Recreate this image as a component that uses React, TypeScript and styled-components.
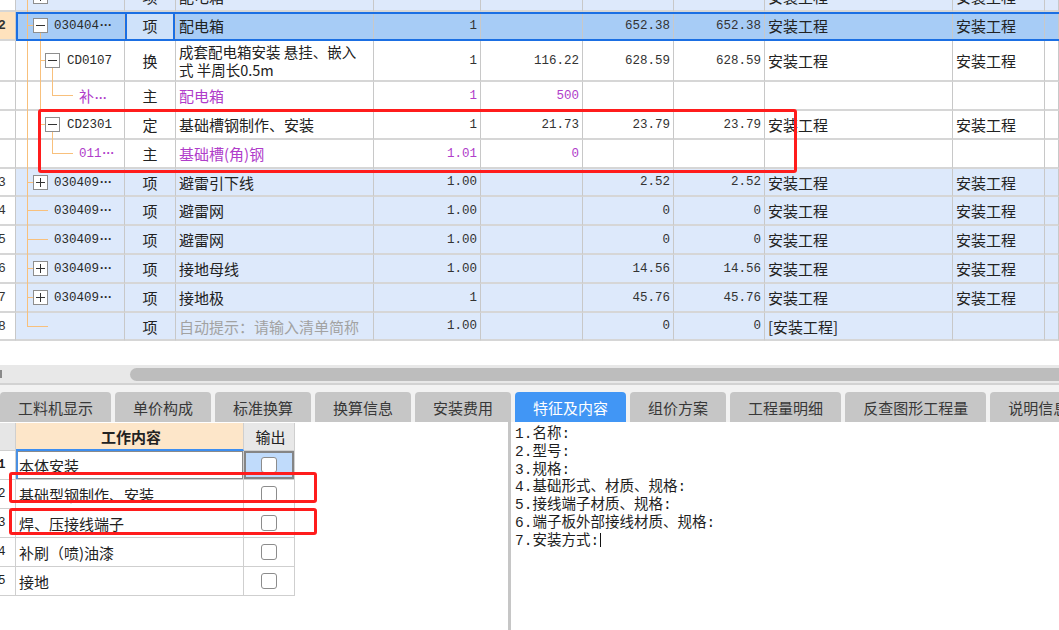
import React from "react";
import styled, { createGlobalStyle, css } from "styled-components";

const CJK = `"Noto Sans CJK SC", "Liberation Sans", sans-serif`;
const MONO = `"Liberation Mono", "DejaVu Sans Mono", "Noto Sans CJK SC", monospace`;
const COLS = "16px 109px 51px 198px 107px 102px 91px 91px 188px 92px 1fr";

const GlobalStyle = createGlobalStyle`
  html, body { margin: 0; padding: 0; background: #fff; }
  body { font-family: ${CJK}; color: #222; overflow: hidden; }
`;

type Kind = "item" | "sel" | "sub";
type Tone = "main" | "hint" | undefined;

const rowBg: Record<Kind, string> = { item: "#dde9fb", sel: "#a7ccf6", sub: "#fff" };
const toneColor = (t: Tone) => (t === "main" ? "#b03dca" : t === "hint" ? "#a2a2a2" : "#222");

interface BillRow {
  h: number;
  kind: Kind;
  num?: string;
  guides: string[];
  box?: "+" | "-";
  pad: number;
  gap?: number;
  code?: string;
  more?: boolean;
  type: string;
  name: React.ReactNode;
  qty?: string;
  price?: string;
  total?: string;
  sum?: string;
  fee?: string;
  major?: string;
  tone?: Tone;
}

const rows: BillRow[] = [
  { h: 29, kind: "item", num: "1", guides: ["V0", "H0b"], box: "+", pad: 17, code: "030404", more: true, type: "项", name: "配电箱", qty: "1", total: "1137.37", sum: "1137.37", fee: "安装工程", major: "安装工程" },
  { h: 29, kind: "sel", num: "2", guides: ["V0", "H0b", "V1d"], box: "-", pad: 17, code: "030404", more: true, type: "项", name: "配电箱", qty: "1", total: "652.38", sum: "652.38", fee: "安装工程", major: "安装工程" },
  {
    h: 41, kind: "sub", guides: ["V0", "V1", "H1b", "V2d"], box: "-", pad: 29, gap: 7, code: "CD0107", type: "换",
    name: (<>成套配电箱安装 悬挂、嵌入<br />式 半周长0.5m</>),
    qty: "1", price: "116.22", total: "628.59", sum: "628.59", fee: "安装工程", major: "安装工程",
  },
  { h: 29, kind: "sub", guides: ["V0", "V1", "V2t", "H2l"], pad: 63, code: "补", more: true, type: "主", name: "配电箱", qty: "1", price: "500", tone: "main" },
  { h: 29, kind: "sub", guides: ["V0", "V1t", "H1b", "V2d"], box: "-", pad: 29, gap: 7, code: "CD2301", type: "定", name: "基础槽钢制作、安装", qty: "1", price: "21.73", total: "23.79", sum: "23.79", fee: "安装工程", major: "安装工程" },
  { h: 29, kind: "sub", guides: ["V0", "V2t", "H2l"], pad: 63, code: "011", more: true, type: "主", name: "基础槽(角)钢", qty: "1.01", price: "0", tone: "main" },
  { h: 28, kind: "item", num: "3", guides: ["V0", "H0b"], box: "+", pad: 17, code: "030409", more: true, type: "项", name: "避雷引下线", qty: "1.00", total: "2.52", sum: "2.52", fee: "安装工程", major: "安装工程" },
  { h: 29, kind: "item", num: "4", guides: ["V0", "H0l"], pad: 38, code: "030409", more: true, type: "项", name: "避雷网", qty: "1.00", total: "0", sum: "0", fee: "安装工程", major: "安装工程" },
  { h: 29, kind: "item", num: "5", guides: ["V0", "H0l"], pad: 38, code: "030409", more: true, type: "项", name: "避雷网", qty: "1.00", total: "0", sum: "0", fee: "安装工程", major: "安装工程" },
  { h: 29, kind: "item", num: "6", guides: ["V0", "H0b"], box: "+", pad: 17, code: "030409", more: true, type: "项", name: "接地母线", qty: "1.00", total: "14.56", sum: "14.56", fee: "安装工程", major: "安装工程" },
  { h: 29, kind: "item", num: "7", guides: ["V0", "H0b"], box: "+", pad: 17, code: "030409", more: true, type: "项", name: "接地极", qty: "1", total: "45.76", sum: "45.76", fee: "安装工程", major: "安装工程" },
  { h: 28, kind: "item", num: "8", guides: ["V0t", "H0l"], pad: 38, type: "项", name: "自动提示：请输入清单简称", qty: "1.00", total: "0", sum: "0", fee: "[安装工程]", tone: "hint" },
];

const tabs = ["工料机显示", "单价构成", "标准换算", "换算信息", "安装费用", "特征及内容", "组价方案", "工程量明细", "反查图形工程量", "说明信息"];
const works = ["本体安装", "基础型钢制作、安装", "焊、压接线端子", "补刷（喷)油漆", "接地"];
const features = ["1.名称:", "2.型号:", "3.规格:", "4.基础形式、材质、规格:", "5.接线端子材质、规格:", "6.端子板外部接线材质、规格:", "7.安装方式:"];

const Page = styled.div`
  width: 1059px;
  height: 630px;
  display: flex;
  flex-direction: column;
  overflow: hidden;
  background: #fff;
`;

const TopArea = styled.div`
  position: relative;
  height: 365px;
  flex: none;
  overflow: hidden;
`;

const GridBody = styled.div`
  margin-top: -17px;
`;

const Row = styled.div<{ $h: number; $kind: Kind }>`
  position: relative;
  display: grid;
  grid-template-columns: ${COLS};
  height: ${(p) => p.$h}px;
  background: ${(p) => rowBg[p.$kind]};
  ${(p) =>
    p.$kind === "sel" &&
    css`
      &::after {
        content: "";
        position: absolute;
        left: 16px;
        right: -4px;
        top: 0;
        bottom: 0;
        border: 2px solid #1b6fe3;
        pointer-events: none;
      }
    `}
`;

const Cell = styled.div<{ $align?: "left" | "right" | "center"; $tone?: Tone }>`
  box-sizing: border-box;
  display: flex;
  align-items: center;
  justify-content: ${(p) => (p.$align === "right" ? "flex-end" : p.$align === "center" ? "center" : "flex-start")};
  padding: 0 3px;
  border-right: 1px solid #c8c8c8;
  border-bottom: 2px solid #d6d6d6;
  overflow: hidden;
  white-space: nowrap;
  font-family: ${CJK};
  font-size: 15px;
  color: ${(p) => toneColor(p.$tone)};
`;

const NumCell = styled(Cell)`
  font-family: ${MONO};
  font-size: 12.5px;
  color: ${(p) => (p.$tone === "main" ? "#b03dca" : "#333")};
`;

const NoCell = styled(Cell)<{ $active?: boolean }>`
  padding: 0;
  background: ${(p) => (p.$active ? "#ffe2bd" : "#fff")};
  font-family: ${MONO};
  font-size: 13px;
  font-weight: ${(p) => (p.$active ? 700 : 400)};
  color: #333;
  text-indent: -2px;
`;

const TypeCell = styled(Cell)<{ $active?: boolean }>`
  ${(p) =>
    p.$active &&
    css`
      background: #cfe2fa;
      box-shadow: inset 2px 0 #1b6fe3, inset -2px 0 #1b6fe3;
    `}
`;

const Wrap = styled.span`
  white-space: normal;
  font-size: 14.5px;
  line-height: 18px;
`;

const CodeCell = styled(Cell)<{ $pad: number }>`
  position: relative;
  overflow: visible;
  padding: 0 0 0 ${(p) => p.$pad}px;
`;

const Guides = styled.svg`
  position: absolute;
  left: 0;
  top: 0;
  overflow: visible;
`;

const ToggleBox = styled.span<{ $gap: number }>`
  position: relative;
  z-index: 1;
  box-sizing: border-box;
  width: 15px;
  height: 15px;
  flex: none;
  display: inline-flex;
  align-items: center;
  justify-content: center;
  margin-right: ${(p) => p.$gap}px;
  border: 1px solid #8e8e8e;
  background: #fff;
`;

const CodeText = styled.span<{ $tone?: Tone }>`
  position: relative;
  z-index: 1;
  font-family: ${MONO};
  font-size: 12.5px;
  color: ${(p) => (p.$tone === "main" ? "#b03dca" : "#2a2a2a")};
`;

const CodeCjk = styled.span`
  font-family: ${CJK};
  font-size: 15px;
`;

const Dots = styled.span`
  font-family: "Liberation Sans", sans-serif;
  font-size: 12px;
  font-weight: 700;
  margin-left: 1px;
`;

const Mark = styled.div<{ $x: number; $y: number; $w: number; $h: number }>`
  position: absolute;
  left: ${(p) => p.$x}px;
  top: ${(p) => p.$y}px;
  width: ${(p) => p.$w}px;
  height: ${(p) => p.$h}px;
  box-sizing: border-box;
  border: 3px solid #ff1c1c;
  border-radius: 3px;
  pointer-events: none;
  z-index: 5;
`;

const HScroll = styled.div`
  flex: none;
  height: 18px;
  display: flex;
  align-items: center;
  background: #e8e8e8;
`;

const ArrowStub = styled.span`
  width: 2px;
  height: 8px;
  background: #8a8a8a;
`;

const Thumb = styled.span`
  height: 13px;
  margin-left: 128px;
  flex: 1;
  border-radius: 7px 0 0 7px;
  background: #bdbdbd;
`;

const TabBar = styled.div`
  flex: none;
  box-sizing: border-box;
  height: 39px;
  display: flex;
  align-items: flex-end;
  gap: 4px;
  border-top: 2px solid #d2d2d2;
  background: #f2f2f2;
  overflow: hidden;
`;

const Tab = styled.div<{ $active?: boolean }>`
  flex: none;
  height: 30px;
  padding: 0 18px;
  display: flex;
  align-items: center;
  border-radius: 4px 4px 0 0;
  font-size: 15px;
  white-space: nowrap;
  background: ${(p) => (p.$active ? "#4196f5" : "#c6c6c6")};
  color: ${(p) => (p.$active ? "#fff" : "#383838")};
`;

const Bottom = styled.div`
  flex: 1;
  display: flex;
  min-height: 0;
`;

const LeftPane = styled.div`
  position: relative;
  width: 508px;
  flex: none;
  padding-top: 1px;
  background: #fff;
`;

const Divider = styled.div`
  width: 3px;
  flex: none;
  background: #c6c6c6;
`;

const RightPane = styled.div`
  flex: 1;
  padding: 4px 0 0 4px;
  font-family: ${MONO};
  font-size: 14.5px;
  line-height: 17.8px;
  color: #1e1e1e;
`;

const Caret = styled.span`
  display: inline-block;
  width: 1px;
  height: 14px;
  margin-left: 1px;
  vertical-align: -2px;
  background: #111;
`;

const WorkTable = styled.div`
  display: grid;
  grid-template-columns: 16px 228px 51px;
  grid-template-rows: 28px repeat(5, 29px);
  width: 295px;
`;

const WCell = styled.div<{ $bg?: string; $align?: "center" | "left" }>`
  box-sizing: border-box;
  display: flex;
  align-items: center;
  justify-content: ${(p) => (p.$align === "center" ? "center" : "flex-start")};
  padding: 0 0 0 3px;
  border-right: 1px solid #cfcfcf;
  border-bottom: 1px solid #cfcfcf;
  background: ${(p) => p.$bg || "#fff"};
  font-size: 15px;
  color: #222;
  white-space: nowrap;
`;

const WHeadTitle = styled(WCell)`
  font-weight: 700;
  border-bottom: 2px solid #3d8ef0;
`;

const WNo = styled(WCell)<{ $bold?: boolean }>`
  padding: 0;
  font-family: ${MONO};
  font-size: 12.5px;
  font-weight: ${(p) => (p.$bold ? 700 : 400)};
  text-indent: -2px;
`;

const WText = styled(WCell)<{ $sel?: boolean }>`
  ${(p) =>
    p.$sel &&
    css`
      box-shadow: inset 2px 0 #4a90e2, inset 0 0 0 1px #8a8a8a;
    `}
`;

const WCheckCell = styled(WCell)<{ $sel?: boolean }>`
  padding: 0;
  ${(p) =>
    p.$sel &&
    css`
      background: #c0dbfb;
      box-shadow: inset 0 0 0 2px #858585;
    `}
`;

const Check = styled.span`
  box-sizing: border-box;
  width: 16px;
  height: 16px;
  border: 1px solid #8c8c8c;
  border-radius: 3px;
  background: #fff;
`;

function TreeGuides({ h, parts }: { h: number; parts: string[] }) {
  const m = Math.floor((h - 2) / 2) + 0.5;
  const seg: Record<string, [number, number, number, number]> = {
    V0: [11.5, 0, 11.5, h],
    V0t: [11.5, 0, 11.5, m],
    H0b: [11, m, 17, m],
    H0l: [11, m, 32, m],
    V1: [24.5, 0, 24.5, h],
    V1t: [24.5, 0, 24.5, m],
    V1d: [24.5, m + 7.5, 24.5, h],
    H1b: [24, m, 29, m],
    V2t: [36.5, 0, 36.5, m],
    V2d: [36.5, m + 7.5, 36.5, h],
    H2l: [36, m, 57, m],
  };
  return (
    <Guides width={109} height={h} shapeRendering="crispEdges">
      {parts.map((p) => {
        const [x1, y1, x2, y2] = seg[p];
        return <line key={p} x1={x1} y1={y1} x2={x2} y2={y2} stroke="#f8c07c" strokeWidth={1} />;
      })}
    </Guides>
  );
}

function Toggle({ sign, gap }: { sign: "+" | "-"; gap: number }) {
  return (
    <ToggleBox $gap={gap}>
      <svg width={9} height={9} shapeRendering="crispEdges">
        <line x1={0} y1={4.5} x2={9} y2={4.5} stroke="#333" strokeWidth={1} />
        {sign === "+" && <line x1={4.5} y1={0} x2={4.5} y2={9} stroke="#333" strokeWidth={1} />}
      </svg>
    </ToggleBox>
  );
}

function BillLine({ r }: { r: BillRow }) {
  const sel = r.kind === "sel";
  const isCjkCode = r.code && /[^\x00-\x7f]/.test(r.code);
  return (
    <Row $h={r.h} $kind={r.kind}>
      <NoCell $active={sel}>{r.num}</NoCell>
      <CodeCell $pad={r.pad}>
        <TreeGuides h={r.h} parts={r.guides} />
        {r.box && <Toggle sign={r.box} gap={r.gap ?? 6} />}
        {r.code && (
          <CodeText $tone={r.tone}>
            {isCjkCode ? <CodeCjk>{r.code}</CodeCjk> : r.code}
            {r.more && <Dots>···</Dots>}
          </CodeText>
        )}
      </CodeCell>
      <TypeCell $align="center" $active={sel}>{r.type}</TypeCell>
      <Cell $tone={r.tone}>{typeof r.name === "string" ? r.name : <Wrap>{r.name}</Wrap>}</Cell>
      <NumCell $align="right" $tone={r.tone}>{r.qty}</NumCell>
      <NumCell $align="right" $tone={r.tone}>{r.price}</NumCell>
      <NumCell $align="right">{r.total}</NumCell>
      <NumCell $align="right">{r.sum}</NumCell>
      <Cell>{r.fee}</Cell>
      <Cell>{r.major}</Cell>
      <Cell />
    </Row>
  );
}

export default function App() {
  return (
    <>
      <GlobalStyle />
      <Page>
        <TopArea>
          <GridBody>
            {rows.map((r, i) => (
              <BillLine key={i} r={r} />
            ))}
          </GridBody>
          <Mark $x={38} $y={109} $w={759} $h={64} />
        </TopArea>
        <HScroll>
          <ArrowStub />
          <Thumb />
        </HScroll>
        <TabBar>
          {tabs.map((t) => (
            <Tab key={t} $active={t === "特征及内容"}>
              {t}
            </Tab>
          ))}
        </TabBar>
        <Bottom>
          <LeftPane>
            <WorkTable>
              <WCell $bg="#e6e6e6" />
              <WHeadTitle $bg="#fde6c9" $align="center">工作内容</WHeadTitle>
              <WCell $bg="#e8e8e8" $align="center">输出</WCell>
              {works.map((w, i) => (
                <React.Fragment key={w}>
                  <WNo $bold={i === 0}>{i + 1}</WNo>
                  <WText $sel={i === 0}>{w}</WText>
                  <WCheckCell $align="center" $sel={i === 0}>
                    <Check />
                  </WCheckCell>
                </React.Fragment>
              ))}
            </WorkTable>
            <Mark $x={9} $y={50} $w={308} $h={31} />
            <Mark $x={9} $y={86} $w={308} $h={27} />
          </LeftPane>
          <Divider />
          <RightPane>
            {features.map((f, i) => (
              <div key={f}>
                {f}
                {i === features.length - 1 && <Caret />}
              </div>
            ))}
          </RightPane>
        </Bottom>
      </Page>
    </>
  );
}
